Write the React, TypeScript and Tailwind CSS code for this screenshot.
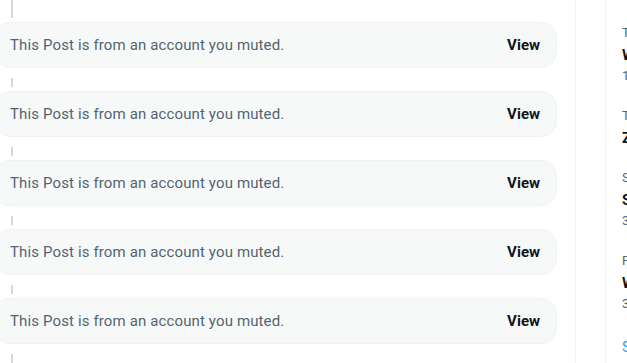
import React from "react";

const Card = () => (
  <div className="ml-[-6px] flex h-[46px] items-center justify-between rounded-2xl border border-[#eff3f4] bg-[#f7f9f9] pl-[15px] pr-4">
    <span className="text-[15px] leading-5 tracking-[0.13px] text-[#536471]">This Post is from an account you muted.</span>
    <span className="text-[15px] font-bold leading-5 text-[#0f1419]">View</span>
  </div>
);

const trends = [
  { top: "Trending in United States", name: "Wimbledon", count: "12.5K posts" },
  { top: "Trending", name: "Zverev", count: "" },
  { top: "Sports · Trending", name: "Sinner", count: "38.2K posts" },
  { top: "Football · Trending", name: "Wembley", count: "3,120 posts" },
];

export default function App() {
  return (
    <div
      className="flex h-[363px] w-[627px] overflow-hidden bg-white"
      style={{ fontFamily: "Roboto, 'Liberation Sans', Arial, sans-serif" }}
    >
      <div className="flex w-[576px] shrink-0 flex-col border-r border-[#eff3f4] pr-[18px]">
        <div className="ml-[11px] h-[18px] w-[2px] bg-[#cfd9de]" />
        <div className="mt-[4px]">
          <Card />
        </div>
        {[0, 1, 2, 3].map((i) => (
          <div key={i} className="flex flex-col">
            <div className="ml-[11px] mt-[10px] h-[9px] w-[2px] bg-[#cfd9de]" />
            <div className="mt-[4px]">
              <Card />
            </div>
          </div>
        ))}
        <div className="ml-[11px] mt-[10px] h-[9px] w-[2px] bg-[#cfd9de]" />
      </div>
      <div className="ml-[29px] w-[300px] shrink-0 border-l border-[#eff3f4] pt-[13px]">
        {trends.map((t) => (
          <div key={t.name} className={`whitespace-nowrap px-4 pt-3 ${t.count ? "pb-3" : "pb-[10px]"}`}>
            <div className="text-[13px] leading-4 text-[#536471]">{t.top}</div>
            <div className="mt-[4px] text-[15px] font-bold leading-5 text-[#0f1419]">{t.name}</div>
            {t.count && <div className="mt-[3px] text-[13px] leading-4 text-[#536471]">{t.count}</div>}
          </div>
        ))}
        <div className="px-4 pb-3 pt-[13px] text-[15px] leading-5 text-[#1d9bf0]">Show more</div>
      </div>
    </div>
  );
}
